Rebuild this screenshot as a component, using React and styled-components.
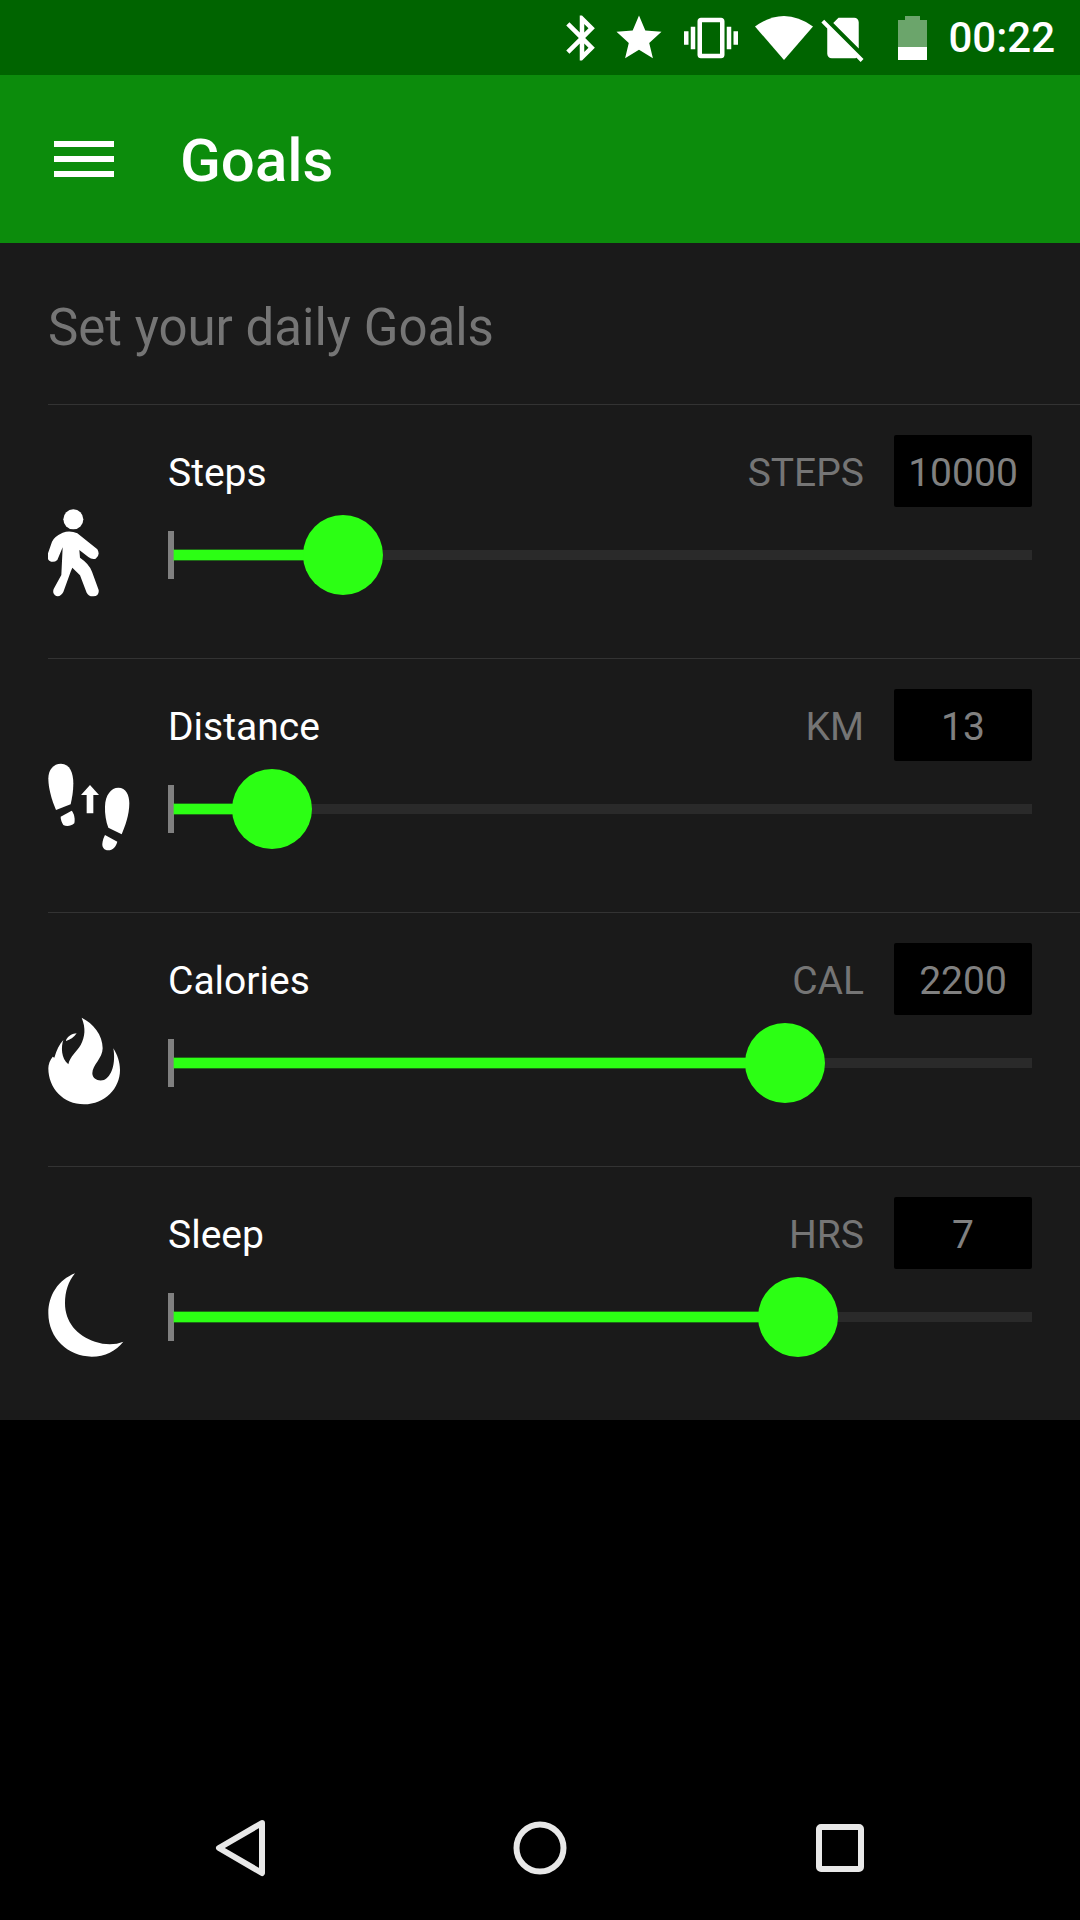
import React from "react";
import styled, { createGlobalStyle } from "styled-components";

const GlobalStyle = createGlobalStyle`
  * {
    box-sizing: border-box;
  }
  html, body {
    margin: 0;
    background: #000;
    font-family: Roboto, "Liberation Sans", sans-serif;
  }
`;

const goals = [
  { id: "steps", label: "Steps", unit: "STEPS", value: "10000", at: 175, Icon: WalkIcon, nudge: 12 },
  { id: "distance", label: "Distance", unit: "KM", value: "13", at: 104, Icon: FeetIcon, nudge: 9 },
  { id: "calories", label: "Calories", unit: "CAL", value: "2200", at: 617, Icon: FlameIcon, nudge: -9 },
  { id: "sleep", label: "Sleep", unit: "HRS", value: "7", at: 630, Icon: MoonIcon, nudge: -12 },
];

function WalkIcon({ nudge }) {
  return (
    <RowIcon viewBox={`54 ${nudge} 360 360`}>
      <circle cx="130" cy="88" r="30" />
      <path d="M98 128 Q120 120 142 130 L202 178 Q212 194 197 206 Q186 210 175 201 L148 180 L150 203 Q178 222 186 245 L206 300 Q208 318 190 319 Q176 320 170 308 L150 256 L127 233 L122 245 L100 306 Q92 321 79 318 Q66 312 71 297 L94 255 L98 172 L82 210 Q70 220 58 212 Q50 206 54 190 L66 155 Q72 140 98 128 Z" />
    </RowIcon>
  );
}

function FeetIcon({ nudge }) {
  return (
    <RowIcon viewBox={`54 ${nudge} 360 360`}>
      <path d="M93 56 C120 56 130 85 130 115 C130 140 126 160 122 178 L78 195 C65 165 55 130 55 100 C55 75 70 56 93 56 Z" />
      <path d="M92 215 L125 197 C132 205 136 220 133 235 C122 245 108 245 100 240 C95 232 92 224 92 215 Z" />
      <path d="M180 120 L207 150 H190 V205 H170 V150 H153 Z" />
      <path d="M265 128 C288 128 298 150 298 175 C298 210 285 245 275 268 L235 248 C228 230 224 205 225 185 C226 150 243 128 265 128 Z" />
      <path d="M225 270 L262 290 C258 305 248 316 235 316 C222 316 216 306 217 296 C218 286 221 278 225 270 Z" />
    </RowIcon>
  );
}

function FlameIcon({ nudge }) {
  return (
    <RowIcon viewBox={`54 ${nudge} 360 360`}>
      <path d="M155 38 C190 55 218 90 218 130 C218 160 187 180 187 205 C187 222 205 230 222 225 C245 215 258 175 250 130 C262 150 270 170 270 195 C270 250 225 298 162 298 C100 298 55 250 55 190 C55 178 60 165 68 155 L73 158 C80 135 88 118 100 105 C93 125 93 160 115 178 C120 155 140 140 152 120 C165 95 168 70 155 38 Z" />
      <path d="M108 105 C115 92 128 86 140 85 C132 97 120 105 108 108 Z" />
    </RowIcon>
  );
}

function MoonIcon({ nudge }) {
  return (
    <RowIcon viewBox={`54 ${nudge} 360 360`}>
      <path d="M135 40 C85 60 55 105 55 160 C55 235 115 290 185 290 C225 290 258 272 280 245 C255 255 225 255 195 245 C140 228 105 185 105 130 C105 95 115 65 135 40 Z" />
    </RowIcon>
  );
}

export default function App() {
  return (
    <>
      <GlobalStyle />
      <Page>
        <StatusBar>
          <StatusIcon viewBox="0 0 24 24" $left={0}>
            <path d="M17.71 7.71L12 2h-1v7.59L6.41 5 5 6.41 10.59 12 5 17.59 6.41 19 11 14.41V22h1l5.71-5.71-4.3-4.29 4.3-4.29zM13 5.83l1.88 1.88L13 9.59V5.83zm1.88 10.46L13 18.17v-3.76l1.88 1.88z" />
          </StatusIcon>
          <StatusIcon viewBox="0 0 24 24" $left={3}>
            <path d="M12 17.27L18.18 21l-1.64-6.81L22 9.24l-7.19-.61L12 2 9.19 8.63 2 9.24l5.46 4.95L5.82 21z" />
          </StatusIcon>
          <StatusIcon viewBox="0 0 24 24" $left={18}>
            <path d="M0 15h2V9H0v6zm3 2h2V7H3v10zm19-8v6h2V9h-2zm-3 8h2V7h-2v10zM16.5 3h-9C6.67 3 6 3.67 6 4.5v15c0 .83.67 1.5 1.5 1.5h9c.83 0 1.5-.67 1.5-1.5v-15c0-.83-.67-1.5-1.5-1.5zM16 19H8V5h8v14z" />
          </StatusIcon>
          <WifiIcon viewBox="0 0 58 44">
            <path d="M0 10.5 Q29 -10.5 58 10.5 L29 44 Z" />
          </WifiIcon>
          <StatusIcon viewBox="0 0 24 24" $left={3}>
            <path d="M18.99 5c0-1.1-.89-2-1.99-2h-7L7.66 5.34 19 16.68 18.99 5zM3.65 3.88L2.38 5.15 5 7.77V19c0 1.1.9 2 2 2h10.01c.35 0 .67-.1.96-.26l1.88 1.88 1.27-1.27L3.65 3.88z" />
          </StatusIcon>
          <BatteryIcon viewBox="0 0 29 44">
            <path d="M7 0h15v4h7v27H0V4h7z" fill="#fff" fillOpacity="0.42" />
            <rect x="0" y="31" width="29" height="13" />
          </BatteryIcon>
          <Clock>00:22</Clock>
        </StatusBar>

        <Toolbar>
          <MenuButton>
            <MenuLine />
            <MenuLine />
            <MenuLine />
          </MenuButton>
          <Title>Goals</Title>
        </Toolbar>

        <Content>
          <Heading>Set your daily Goals</Heading>
          {goals.map(({ id, label, unit, value, at, Icon, nudge }) => (
            <Row key={id}>
              <Icon nudge={nudge} />
              <Controls>
                <RowHead>
                  <Label>{label}</Label>
                  <Unit>{unit}</Unit>
                  <ValueBox>{value}</ValueBox>
                </RowHead>
                <Slider>
                  <Tick />
                  <Fill style={{ width: at - 6 }} />
                  <Track />
                  <Thumb style={{ left: at - 40 }} />
                </Slider>
              </Controls>
            </Row>
          ))}
        </Content>

        <NavBar>
          <NavSlot>
            <NavIcon viewBox="0 0 60 60">
              <path d="M52 5 L9 30 L52 55 Z" />
            </NavIcon>
          </NavSlot>
          <NavSlot>
            <NavIcon viewBox="0 0 60 60">
              <circle cx="30" cy="30" r="23.5" />
            </NavIcon>
          </NavSlot>
          <NavSlot>
            <NavIcon viewBox="0 0 60 60">
              <rect x="9" y="9" width="42" height="42" rx="2" />
            </NavIcon>
          </NavSlot>
        </NavBar>
      </Page>
    </>
  );
}

const Page = styled.div`
  width: 1080px;
  min-height: 1920px;
  display: flex;
  flex-direction: column;
  background: #000;
`;

const StatusBar = styled.div`
  height: 75px;
  display: flex;
  align-items: center;
  justify-content: flex-end;
  padding-right: 25px;
  background: #006400;
`;

const StatusIcon = styled.svg`
  width: 54px;
  height: 54px;
  margin-left: ${(p) => p.$left}px;
  fill: #fff;
  flex: none;
`;

const WifiIcon = styled.svg`
  width: 58px;
  height: 44px;
  margin-left: 17px;
  fill: #fff;
  flex: none;
`;

const BatteryIcon = styled.svg`
  width: 29px;
  height: 44px;
  margin-left: 28px;
  fill: #fff;
  flex: none;
`;

const Clock = styled.div`
  margin-left: 21px;
  font-size: 42px;
  font-weight: 500;
  color: #fff;
`;

const Toolbar = styled.div`
  height: 168px;
  display: flex;
  align-items: center;
  padding-left: 54px;
  background: #0c8c0c;
`;

const MenuButton = styled.div`
  width: 60px;
  display: flex;
  flex-direction: column;
  gap: 9px;
`;

const MenuLine = styled.span`
  height: 6px;
  background: #fff;
`;

const Title = styled.h1`
  margin: 3px 0 0 66px;
  font-size: 60px;
  font-weight: 500;
  color: #fff;
`;

const Content = styled.div`
  background: #1a1a1a;
`;

const Heading = styled.h2`
  height: 161px;
  margin: 0;
  padding: 8px 0 0 48px;
  display: flex;
  align-items: center;
  font-size: 51px;
  font-weight: 400;
  color: #757575;
`;

const Row = styled.div`
  height: 254px;
  margin-left: 48px;
  padding: 30px 48px 0 0;
  display: flex;
  border-top: 1px solid #333;
`;

const RowIcon = styled.svg`
  width: 120px;
  height: 120px;
  margin-top: 59px;
  fill: #fff;
  flex: none;
`;

const Controls = styled.div`
  flex: 1;
  display: flex;
  flex-direction: column;
  gap: 8px;
`;

const RowHead = styled.div`
  height: 72px;
  display: flex;
  align-items: center;
`;

const Label = styled.span`
  flex: 1;
  margin-top: 4px;
  font-size: 39px;
  color: #fff;
`;

const Unit = styled.span`
  margin-top: 4px;
  font-size: 39px;
  color: #757575;
`;

const ValueBox = styled.div`
  width: 138px;
  height: 72px;
  margin-left: 30px;
  padding-top: 4px;
  display: flex;
  align-items: center;
  justify-content: center;
  border-radius: 2px;
  background: #000;
  font-size: 39px;
  color: #808080;
`;

const Slider = styled.div`
  position: relative;
  height: 80px;
  display: flex;
  align-items: center;
`;

const Tick = styled.span`
  width: 6px;
  height: 48px;
  flex: none;
  background: #808080;
`;

const Fill = styled.span`
  height: 10px;
  flex: none;
  background: #2cff14;
  box-shadow: 0 0 0 1px rgba(44, 255, 20, 0.35);
`;

const Track = styled.span`
  height: 10px;
  flex: 1;
  background: #2a2a2a;
`;

const Thumb = styled.span`
  position: absolute;
  top: 0;
  width: 80px;
  height: 80px;
  border-radius: 50%;
  background: #2cff14;
`;

const NavBar = styled.div`
  height: 144px;
  margin-top: auto;
  display: flex;
  align-items: center;
  justify-content: center;
`;

const NavSlot = styled.div`
  width: 300px;
  display: flex;
  justify-content: center;
`;

const NavIcon = styled.svg`
  width: 60px;
  height: 60px;
  fill: none;
  stroke: #e8e8e8;
  stroke-width: 6;
  stroke-linejoin: round;
`;
